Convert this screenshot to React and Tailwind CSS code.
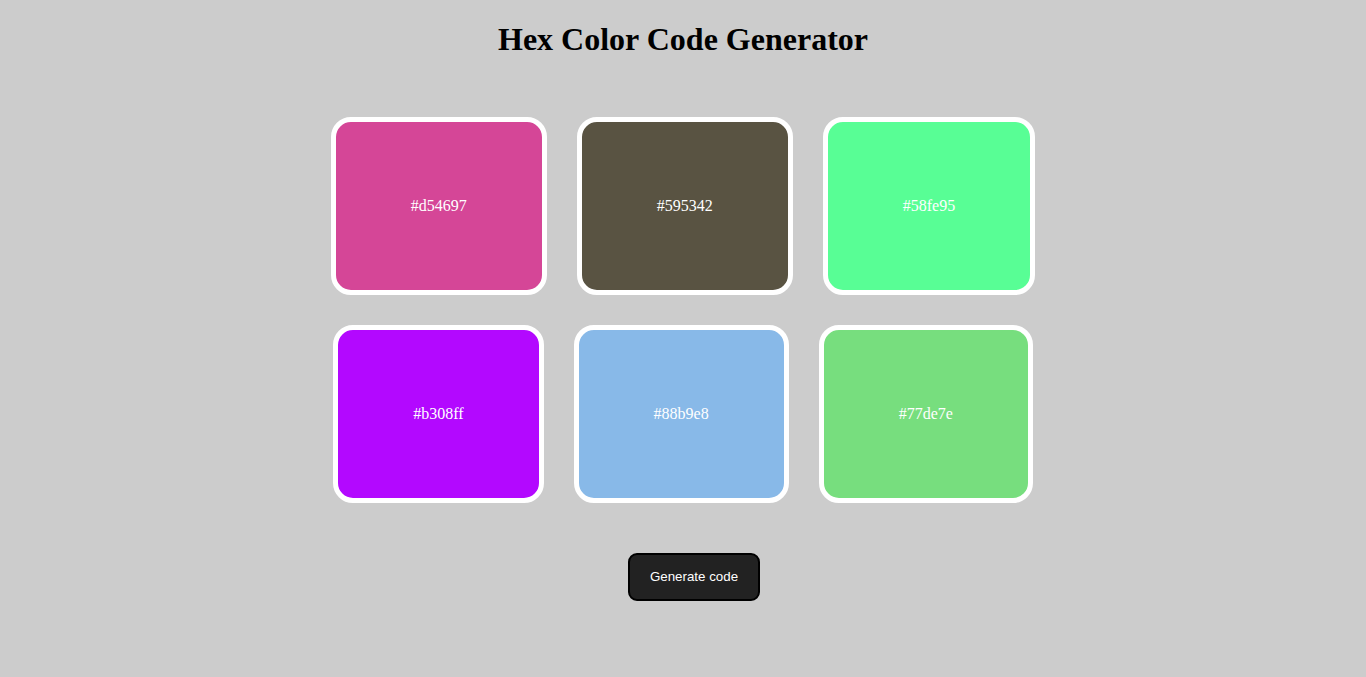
import React from "react";

const colors = ["#d54697", "#595342", "#58fe95", "#b308ff", "#88b9e8", "#77de7e"];

export default function App() {
  return (
    <div className="min-h-screen bg-[#cccccc] pt-[21px] font-['Liberation_Serif','Times_New_Roman',serif] text-black">
      <h1 className="text-center text-[32px] font-bold leading-[36px]">Hex Color Code Generator</h1>
      <div className="mx-auto mt-[45px] flex w-[800px] flex-wrap justify-center">
        {colors.map((c) => (
          <div
            key={c}
            className="m-[15px] rounded-[20px] border-[5px] border-white p-[75px] text-[16px] leading-[18px] text-white"
            style={{ backgroundColor: c }}
          >
            {c}
          </div>
        ))}
      </div>
      <div className="mt-[35px] flex justify-center pl-[22px]">
        <button className="h-[48px] w-[132px] rounded-[9px] border-2 border-black bg-[#222222] font-['Liberation_Sans',Arial,sans-serif] text-[13.33px] text-white">
          Generate code
        </button>
      </div>
    </div>
  );
}
